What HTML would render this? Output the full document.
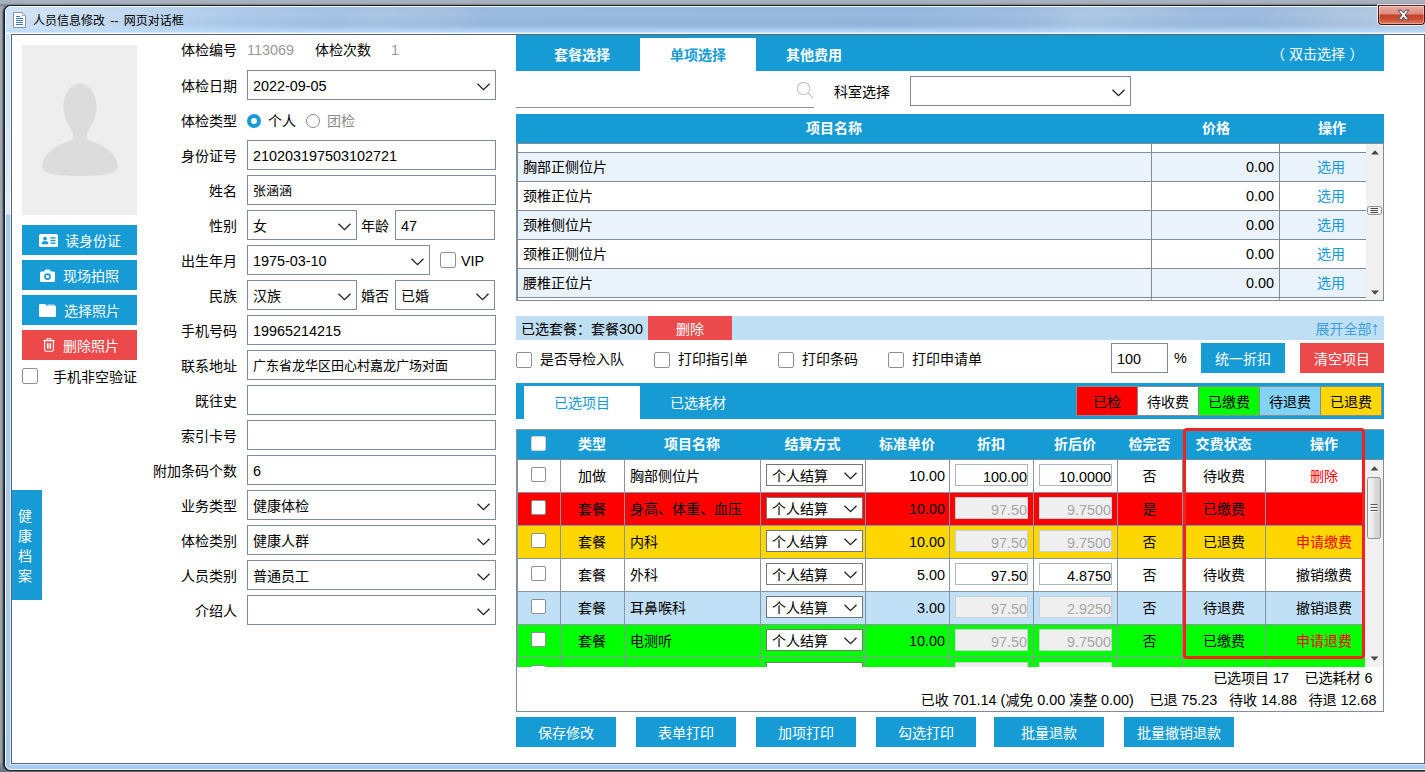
<!DOCTYPE html>
<html lang="zh-CN">
<head>
<meta charset="utf-8">
<title>人员信息修改 -- 网页对话框</title>
<style>
*{box-sizing:border-box;margin:0;padding:0}
html,body{width:1425px;height:772px;overflow:hidden}
body{position:relative;background:#a3adb9;font-family:"Liberation Sans","Noto Sans CJK SC",sans-serif;font-size:14px;color:#000;line-height:1}
.a{position:absolute}
/* window chrome */
#desk{left:0;top:0;width:1425px;height:772px;background:linear-gradient(180deg,#a9b3bf 0,#a6b0bc 3px,#7d8590 5px,#7d8590 6px,#9ea8b4 7px,#9ea8b4 400px,#98a2ae 760px,#6a727c 772px)}
#win{left:4px;top:5px;width:1440px;height:766px;border:1px solid #1c2026;border-radius:7px 0 0 7px;background:#a9cbee;box-shadow:-1px 0 0 rgba(30,33,38,.7),-2px 0 1px rgba(0,0,0,.25)}
#winhi{left:5px;top:6px;width:1440px;height:764px;border:1px solid #f4f9fe;border-radius:6px 0 0 6px;background:linear-gradient(180deg,#d0e3f7 0,#d2e4f6 120px,#e0ecf9 207px,#a9c9ed 208px,#a8caee 100%)}
#tbar{left:6px;top:7px;width:1419px;height:27px;border-radius:5px 0 0 0;background:linear-gradient(180deg,rgba(255,255,255,0) 0,rgba(255,255,255,.04) 8px,rgba(0,0,0,.02) 16px,rgba(200,228,255,.0) 19px,rgba(185,220,255,.75) 24px,rgba(185,220,255,.75) 25px,rgba(255,255,255,.8) 26px),linear-gradient(115deg,transparent 300px,rgba(255,255,255,.10) 340px,rgba(255,255,255,.10) 400px,transparent 440px,transparent 930px,rgba(255,255,255,.12) 980px,rgba(255,255,255,.05) 1040px,transparent 1080px),linear-gradient(90deg,#d0e3f7 0,#c6dcf3 90px,#abc9ea 230px,#98b9de 420px,#94b6dc 900px,#a0bfe2 1080px,#9ab9dd 1250px,#b3c9e2 1380px)}
#title{left:33px;top:13px;font-size:12px;line-height:16px;word-spacing:2px;color:#000;white-space:nowrap}
#closeb{left:1378px;top:5px;width:47px;height:20px;border:1px solid #47160f;border-top-color:#5a2a22;border-radius:0 0 4px 4px;background:linear-gradient(180deg,#e9aaa1 0,#dc8b7f 8px,#c4402a 9px,#cc4a31 13px,#dd7e62 18px);box-shadow:0 0 0 1px rgba(255,255,255,.75)}
#closeh{left:0;top:0;width:45px;height:18px;border:1px solid rgba(255,255,255,.35);border-radius:0 0 3px 3px}
#content{left:11px;top:34px;width:1414px;height:730px;border:1px solid #5a6673;background:#fff;box-shadow:0 0 0 1px rgba(255,255,255,.55)}
/* form */
.lb{position:absolute;left:140px;width:97px;text-align:right;line-height:32px;height:30px;white-space:nowrap}
.in{position:absolute;height:30px;border:1px solid #7f8c99;background:#fff;line-height:28px;padding:1px 0 0 5px;white-space:nowrap;overflow:hidden;font-size:13px}
.chev{position:absolute;right:5px;top:12px;width:13px;height:8px}
.btn{position:absolute;height:30px;line-height:32px;overflow:hidden;color:#fff;background:#169bd5;text-align:center;white-space:nowrap}
.red{background:#ec4a4a}
.cb{position:absolute;width:16px;height:16px;border:1px solid #8f8f8f;border-radius:2px;background:#fff}
.g{color:#999}
.in.s{font-size:14px}

.n{font-size:14.4px}
.bar{background:#169bd5}
.tab{height:33px;line-height:35px;overflow:hidden;text-align:center;color:#fff;font-weight:bold;white-space:nowrap}
.tab.on{background:#fff;color:#169bd5}
.thc{height:30px;line-height:28px;text-align:center;color:#fff;font-weight:bold;white-space:nowrap}
.r1{left:0;width:849px;height:29px;line-height:29px;border-top:1px solid #7f8c99;white-space:nowrap}
.lk{color:#169bd5;text-align:center}
.lg{width:62px;height:30px;line-height:30px;border:1px solid #8c8c8c;text-align:center;white-space:nowrap}
.r2{left:0;width:848px;height:33px;line-height:33px;white-space:nowrap}
.r2 span{top:0}
.c{text-align:center}
.sel{position:absolute;width:97px;height:22px;line-height:23px;overflow:hidden;border:1px solid #767676;background:#fff;padding-left:5px}
.ti{position:absolute;width:73px;height:22px;line-height:22px;border:1px solid #abb6c2;background:#fff;text-align:right;padding:1px 0 0 0;overflow:hidden}
.ti.dis{background:#efefef;color:#a6a6a6;border-color:#c8cfd6}
</style>
</head>
<body>
<div class="a" id="desk"></div>
<div class="a" id="win"></div>
<div class="a" id="winhi"></div>
<div class="a" id="tbar"></div>
<svg class="a" style="left:13px;top:12px" width="14" height="17" viewBox="0 0 14 17"><path d="M0.5 0.5 H9.5 L12.5 3.5 V15.5 H0.5 Z" fill="#fff" stroke="#8e9297"/><path d="M9.5 0.5 V3.5 H12.5" fill="#eef1f5" stroke="#a9adb3"/><path d="M3 4.5 H7 M3 6.5 H10 M3 8.5 H10 M3 10.5 H10 M3 12.5 H10" stroke="#3b78c5" stroke-width="1"/></svg>
<div class="a" id="title">人员信息修改 -- 网页对话框</div>
<div class="a" id="closeb"><div class="a" id="closeh"></div><svg class="a" style="left:18px;top:3px" width="13" height="12" viewBox="0 0 13 12"><path d="M1.2 1.2 H4.4 L6.5 4 L8.6 1.2 H11.8 L8.2 6 L11.8 10.8 H8.6 L6.5 8 L4.4 10.8 H1.2 L4.8 6 Z" fill="#fff" stroke="#4a4f5e" stroke-width="1" stroke-linejoin="round"/></svg></div>
<div class="a" id="content"></div>

<!-- LEFT -->
<div id="left">
<!-- photo -->
<div class="a" style="left:22px;top:45px;width:115px;height:170px;background:#eeeeee;overflow:hidden">
<svg class="a" style="left:0;top:0" width="115" height="170" viewBox="0 0 115 170"><path d="M58 38.5 C67 38.5 74.5 49 74.5 62 C74.5 73 69 81 65.5 87 C64 90 64.5 94 68 96 C80 99 95.5 108 95.5 121 C95.5 128 85 131 58 131 C31 131 20.5 128 20.5 121 C20.5 108 36 99 48 96 C51.5 94 52 90 50.5 87 C47 81 41.5 73 41.5 62 C41.5 49 49 38.5 58 38.5 Z" fill="#dcdcdc"/></svg>
</div>
<!-- buttons -->
<div class="btn" style="left:22px;top:225px;width:115px"><svg class="a" style="left:17px;top:9px" width="19" height="13" viewBox="0 0 19 13"><rect x="0" y="0" width="19" height="13" rx="1.5" fill="#fff"/><circle cx="6" cy="4.6" r="1.9" fill="#169bd5"/><path d="M2.6 10.2 C2.6 7.6 4.2 7 6 7 C7.8 7 9.4 7.6 9.4 10.2 Z" fill="#169bd5"/><rect x="11.5" y="3.2" width="5" height="1.4" fill="#169bd5"/><rect x="11.5" y="5.8" width="5" height="1.4" fill="#169bd5"/><rect x="11.5" y="8.4" width="5" height="1.4" fill="#169bd5"/></svg><span class="a" style="left:43px;top:0">读身份证</span></div>
<div class="btn" style="left:22px;top:260px;width:115px"><svg class="a" style="left:18px;top:9px" width="15" height="13" viewBox="0 0 15 13"><path d="M1.5 2.5 H4.2 L5.3 0.6 H9.7 L10.8 2.5 H13.5 Q15 2.5 15 4 V11.5 Q15 13 13.5 13 H1.5 Q0 13 0 11.5 V4 Q0 2.5 1.5 2.5 Z" fill="#fff"/><circle cx="7.5" cy="7.6" r="3.4" fill="#169bd5"/><circle cx="7.5" cy="7.6" r="1.7" fill="#fff"/></svg><span class="a" style="left:41px;top:0">现场拍照</span></div>
<div class="btn" style="left:22px;top:295px;width:115px"><svg class="a" style="left:17px;top:9px" width="17" height="13" viewBox="0 0 17 13"><path d="M1.2 0 H6.2 L7.8 1.8 H15.8 Q17 1.8 17 3 V11.8 Q17 13 15.8 13 H1.2 Q0 13 0 11.8 V1.2 Q0 0 1.2 0 Z" fill="#fff"/><path d="M8.5 1.1 H14.6 Q15.8 1.1 15.9 2" stroke="#fff" stroke-width="1" fill="none"/></svg><span class="a" style="left:42px;top:0">选择照片</span></div>
<div class="btn red" style="left:22px;top:330px;width:115px"><svg class="a" style="left:21px;top:8px" width="12" height="14" viewBox="0 0 12 14"><path d="M0.3 2.6 H11.7 M4 2.4 V0.7 H8 V2.4 M1.6 2.8 V11.6 Q1.6 13.3 3.3 13.3 H8.7 Q10.4 13.3 10.4 11.6 V2.8 M4.4 5.2 V10.8 M6 5.2 V10.8 M7.6 5.2 V10.8" stroke="#fff" stroke-width="1.1" fill="none"/></svg><span class="a" style="left:41px;top:0">删除照片</span></div>
<div class="cb" style="left:22px;top:368px"></div>
<div class="a" style="left:53px;top:361px;line-height:32px;white-space:nowrap">手机非空验证</div>
<!-- vertical tab -->
<div class="a" style="left:12px;top:490px;width:30px;height:110px;background:#169bd5;color:#fff;text-align:center;line-height:20px;padding:16px 4px 0 0">健<br>康<br>档<br>案</div>

<!-- form rows -->
<div class="lb" style="top:34px">体检编号</div><div class="a g n" style="left:247px;top:34px;line-height:32px">113069</div>
<div class="a" style="left:315px;top:34px;line-height:32px">体检次数</div><div class="a g n" style="left:391px;top:34px;line-height:32px">1</div>

<div class="lb" style="top:70px">体检日期</div><div class="in n" style="left:247px;top:70px;width:249px">2022-09-05<svg class="chev" viewBox="0 0 13 8"><path d="M0.5 0.7 L6.5 6.7 L12.5 0.7" stroke="#222" stroke-width="1.3" fill="none"/></svg></div>

<div class="lb" style="top:105px">体检类型</div>
<div class="a" style="left:247px;top:114px;width:14px;height:14px;border-radius:7px;border:4px solid #169bd5;background:#fff"></div>
<div class="a" style="left:268px;top:105px;line-height:32px">个人</div>
<div class="a" style="left:306px;top:114px;width:14px;height:14px;border-radius:7px;border:1px solid #8f8f8f;background:#fff"></div>
<div class="a g" style="left:327px;top:105px;line-height:32px;color:#8c8c8c">团检</div>

<div class="lb" style="top:140px">身份证号</div><div class="in n" style="left:247px;top:140px;width:249px">210203197503102721</div>
<div class="lb" style="top:175px">姓名</div><div class="in" style="left:247px;top:175px;width:249px">张涵涵</div>
<div class="lb" style="top:210px">性别</div><div class="in s" style="left:247px;top:210px;width:110px">女<svg class="chev" viewBox="0 0 13 8"><path d="M0.5 0.7 L6.5 6.7 L12.5 0.7" stroke="#222" stroke-width="1.3" fill="none"/></svg></div>
<div class="a" style="left:361px;top:210px;line-height:32px">年龄</div><div class="in n" style="left:395px;top:210px;width:100px">47</div>
<div class="lb" style="top:245px">出生年月</div><div class="in n" style="left:247px;top:245px;width:183px">1975-03-10<svg class="chev" viewBox="0 0 13 8"><path d="M0.5 0.7 L6.5 6.7 L12.5 0.7" stroke="#222" stroke-width="1.3" fill="none"/></svg></div>
<div class="cb" style="left:440px;top:252px"></div><div class="a n" style="left:461px;top:245px;line-height:32px">VIP</div>
<div class="lb" style="top:280px">民族</div><div class="in s" style="left:247px;top:280px;width:110px">汉族<svg class="chev" viewBox="0 0 13 8"><path d="M0.5 0.7 L6.5 6.7 L12.5 0.7" stroke="#222" stroke-width="1.3" fill="none"/></svg></div>
<div class="a" style="left:361px;top:280px;line-height:32px">婚否</div><div class="in s" style="left:395px;top:280px;width:100px">已婚<svg class="chev" viewBox="0 0 13 8"><path d="M0.5 0.7 L6.5 6.7 L12.5 0.7" stroke="#222" stroke-width="1.3" fill="none"/></svg></div>
<div class="lb" style="top:315px">手机号码</div><div class="in n" style="left:247px;top:315px;width:249px">19965214215</div>
<div class="lb" style="top:350px">联系地址</div><div class="in" style="left:247px;top:350px;width:249px">广东省龙华区田心村嘉龙广场对面</div>
<div class="lb" style="top:385px">既往史</div><div class="in" style="left:247px;top:385px;width:249px"></div>
<div class="lb" style="top:420px">索引卡号</div><div class="in" style="left:247px;top:420px;width:249px"></div>
<div class="lb" style="top:455px">附加条码个数</div><div class="in n" style="left:247px;top:455px;width:249px">6</div>
<div class="lb" style="top:490px">业务类型</div><div class="in s" style="left:247px;top:490px;width:249px">健康体检<svg class="chev" viewBox="0 0 13 8"><path d="M0.5 0.7 L6.5 6.7 L12.5 0.7" stroke="#222" stroke-width="1.3" fill="none"/></svg></div>
<div class="lb" style="top:525px">体检类别</div><div class="in s" style="left:247px;top:525px;width:249px">健康人群<svg class="chev" viewBox="0 0 13 8"><path d="M0.5 0.7 L6.5 6.7 L12.5 0.7" stroke="#222" stroke-width="1.3" fill="none"/></svg></div>
<div class="lb" style="top:560px">人员类别</div><div class="in s" style="left:247px;top:560px;width:249px">普通员工<svg class="chev" viewBox="0 0 13 8"><path d="M0.5 0.7 L6.5 6.7 L12.5 0.7" stroke="#222" stroke-width="1.3" fill="none"/></svg></div>
<div class="lb" style="top:595px">介绍人</div><div class="in s" style="left:247px;top:595px;width:249px"><svg class="chev" viewBox="0 0 13 8"><path d="M0.5 0.7 L6.5 6.7 L12.5 0.7" stroke="#222" stroke-width="1.3" fill="none"/></svg></div>
</div>

<!-- RIGHT -->
<div id="right">
<div class="a bar" style="left:516px;top:35px;width:868px;height:36px"></div>
<div class="a tab" style="left:524px;top:38px;width:116px">套餐选择</div>
<div class="a tab on" style="left:640px;top:38px;width:116px">单项选择</div>
<div class="a tab" style="left:756px;top:38px;width:116px">其他费用</div>
<div class="a" style="left:1275px;top:38px;width:82px;height:33px;line-height:33px;color:#fff;text-align:center;white-space:nowrap"><span style="position:relative;left:-4px">（</span>双击选择<span style="position:relative;left:4.5px">）</span></div>
<div class="a" style="left:516px;top:107px;width:298px;height:1px;background:#8795a3"></div>
<svg class="a" style="left:796px;top:81px" width="18" height="18" viewBox="0 0 18 18"><circle cx="7.6" cy="7.6" r="6.2" stroke="#c4c4c4" stroke-width="1.1" fill="none"/><path d="M12.2 12.2 L17 17" stroke="#c4c4c4" stroke-width="1.1"/></svg>
<div class="a" style="left:834px;top:77px;line-height:30px;white-space:nowrap">科室选择</div>
<div class="in" style="left:910px;top:76px;width:221px"><svg class="chev" viewBox="0 0 13 8"><path d="M0.5 0.7 L6.5 6.7 L12.5 0.7" stroke="#222" stroke-width="1.3" fill="none"/></svg></div>
<div class="a bar th" style="left:516px;top:114px;width:868px;height:30px"></div>
<div class="a thc" style="left:516px;top:114px;width:636px">项目名称</div>
<div class="a thc" style="left:1152px;top:114px;width:128px">价格</div>
<div class="a thc" style="left:1280px;top:114px;width:104px">操作</div>
<div class="a" style="left:516px;top:143px;width:868px;height:158px;border:1px solid #7f8c99;background:#fff;overflow:hidden">
<div class="a r1" style="top:8px;background:#eaf2fb"><span class="a" style="left:6px;top:0">胸部正侧位片</span><span class="a n" style="right:92px;top:0">0.00</span><span class="a lk" style="left:786px;top:0;width:56px">选用</span></div>
<div class="a r1" style="top:37px;background:#fff"><span class="a" style="left:6px;top:0">颈椎正位片</span><span class="a n" style="right:92px;top:0">0.00</span><span class="a lk" style="left:786px;top:0;width:56px">选用</span></div>
<div class="a r1" style="top:66px;background:#eaf2fb"><span class="a" style="left:6px;top:0">颈椎侧位片</span><span class="a n" style="right:92px;top:0">0.00</span><span class="a lk" style="left:786px;top:0;width:56px">选用</span></div>
<div class="a r1" style="top:95px;background:#fff"><span class="a" style="left:6px;top:0">颈椎正侧位片</span><span class="a n" style="right:92px;top:0">0.00</span><span class="a lk" style="left:786px;top:0;width:56px">选用</span></div>
<div class="a r1" style="top:124px;background:#eaf2fb"><span class="a" style="left:6px;top:0">腰椎正位片</span><span class="a n" style="right:92px;top:0">0.00</span><span class="a lk" style="left:786px;top:0;width:56px">选用</span></div>
<div class="a" style="left:0;top:153px;width:849px;height:1px;background:#7f8c99"></div>
<div class="a" style="left:0;top:0;width:1px;height:158px;background:#7f8c99"></div>
<div class="a" style="left:634px;top:0;width:1px;height:158px;background:#7f8c99"></div>
<div class="a" style="left:762px;top:0;width:1px;height:158px;background:#7f8c99"></div>
<div class="a" style="left:849px;top:0;width:17px;height:156px;background:#f0f0f0"></div>
<svg class="a" style="left:849px;top:0" width="17" height="156" viewBox="0 0 17 156"><path d="M5 10.5 L9 6.3 L13 10.5 Z" fill="#484848"/><path d="M5 146.5 L9 150.7 L13 146.5 Z" fill="#484848"/><rect x="1.5" y="62.5" width="14" height="8" rx="2" fill="#f2f2f2" stroke="#8f8f8f"/><path d="M4.5 64.5 H12 M4.5 66.5 H12 M4.5 68.5 H12" stroke="#4a4a4a" stroke-width="1"/></svg>
</div>
<div class="a" style="left:516px;top:316px;width:868px;height:24px;background:#bfdff5"></div>
<div class="a" style="left:521px;top:316px;line-height:26px;white-space:nowrap">已选套餐：套餐<span class="n">300</span></div>
<div class="btn red" style="left:648px;top:316px;width:84px;height:24px;line-height:26px">删除</div>
<div class="a" style="left:1290px;top:316px;width:90px;text-align:right;line-height:26px;height:24px;overflow:hidden;color:#3f9fdb;white-space:nowrap">展开全部<span style="font-size:19px;line-height:10px;position:relative;top:1px;margin-left:-1px">↑</span></div>
<div class="cb" style="left:516px;top:352px"></div><div class="a" style="left:540px;top:344px;line-height:30px;white-space:nowrap">是否导检入队</div>
<div class="cb" style="left:654px;top:352px"></div><div class="a" style="left:678px;top:344px;line-height:30px;white-space:nowrap">打印指引单</div>
<div class="cb" style="left:778px;top:352px"></div><div class="a" style="left:802px;top:344px;line-height:30px;white-space:nowrap">打印条码</div>
<div class="cb" style="left:888px;top:352px"></div><div class="a" style="left:912px;top:344px;line-height:30px;white-space:nowrap">打印申请单</div>
<div class="in n" style="left:1111px;top:343px;width:57px">100</div>
<div class="a n" style="left:1174px;top:343px;line-height:30px">%</div>
<div class="btn" style="left:1201px;top:343px;width:84px">统一折扣</div>
<div class="btn red" style="left:1300px;top:343px;width:84px">清空项目</div>
<div class="a bar" style="left:516px;top:383px;width:868px;height:36px"></div>
<div class="a tab on" style="left:524px;top:386px;width:116px;font-weight:normal">已选项目</div>
<div class="a tab" style="left:640px;top:386px;width:116px;font-weight:normal">已选耗材</div>
<div class="a lg" style="left:1076px;top:386px;background:#ff0000">已检</div>
<div class="a lg" style="left:1137px;top:386px;background:#ffffff">待收费</div>
<div class="a lg" style="left:1198px;top:386px;background:#00ff00">已缴费</div>
<div class="a lg" style="left:1259px;top:386px;background:#81d3f8">待退费</div>
<div class="a lg" style="left:1320px;top:386px;background:#ffd700">已退费</div>
<div class="a bar" style="left:516px;top:429px;width:868px;height:31px;border-top:1px solid #8b959e;border-left:1px solid #8b959e"></div>
<div class="a" style="left:531px;top:436px;width:15px;height:15px;background:#fff;border-radius:2px;border:1px solid #d8d0cc"></div>
<div class="a thc" style="left:560px;top:430px;width:64px">类型</div>
<div class="a thc" style="left:624px;top:430px;width:136px">项目名称</div>
<div class="a thc" style="left:760px;top:430px;width:105px">结算方式</div>
<div class="a thc" style="left:865px;top:430px;width:84px">标准单价</div>
<div class="a thc" style="left:949px;top:430px;width:84px">折扣</div>
<div class="a thc" style="left:1033px;top:430px;width:84px">折后价</div>
<div class="a thc" style="left:1117px;top:430px;width:65px">检完否</div>
<div class="a thc" style="left:1182px;top:430px;width:83px">交费状态</div>
<div class="a thc" style="left:1265px;top:430px;width:118px">操作</div>
<div class="a" style="left:516px;top:459px;width:868px;height:253px;border:1px solid #7f8c99;background:#fff"></div>
<div class="a" style="left:517px;top:460px;width:866px;height:207px;overflow:hidden">
<div class="a r2" style="top:0px;background:#fff">
<div class="cb" style="left:14px;top:7px;width:15px;height:15px"></div>
<span class="a c" style="left:43px;width:64px">加做</span>
<span class="a" style="left:113px">胸部侧位片</span>
<div class="sel" style="left:249px;top:4px">个人结算<svg class="a" style="right:5px;top:7px" width="13" height="8" viewBox="0 0 13 8"><path d="M0.5 0.7 L6.5 6.7 L12.5 0.7" stroke="#222" stroke-width="1.3" fill="none"/></svg></div>
<span class="a n" style="right:420px">10.00</span>
<div class="ti n" style="left:438px;top:4px">100.00</div>
<div class="ti n" style="left:522px;top:4px">10.0000</div>
<span class="a c" style="left:600px;width:65px">否</span>
<span class="a c" style="left:666px;width:82px">待收费</span>
<span class="a c" style="left:766px;width:82px;color:#f00">删除</span>
</div>
<div class="a r2" style="top:33px;background:#ff0000">
<div class="cb" style="left:14px;top:7px;width:15px;height:15px"></div>
<span class="a c" style="left:43px;width:64px">套餐</span>
<span class="a" style="left:113px">身高、体重、血压</span>
<div class="sel" style="left:249px;top:4px">个人结算<svg class="a" style="right:5px;top:7px" width="13" height="8" viewBox="0 0 13 8"><path d="M0.5 0.7 L6.5 6.7 L12.5 0.7" stroke="#222" stroke-width="1.3" fill="none"/></svg></div>
<span class="a n" style="right:420px">10.00</span>
<div class="ti n dis" style="left:438px;top:4px">97.50</div>
<div class="ti n dis" style="left:522px;top:4px">9.7500</div>
<span class="a c" style="left:600px;width:65px">是</span>
<span class="a c" style="left:666px;width:82px">已缴费</span>
<span class="a c" style="left:766px;width:82px;color:#000"></span>
</div>
<div class="a r2" style="top:66px;background:#ffd700">
<div class="cb" style="left:14px;top:7px;width:15px;height:15px"></div>
<span class="a c" style="left:43px;width:64px">套餐</span>
<span class="a" style="left:113px">内科</span>
<div class="sel" style="left:249px;top:4px">个人结算<svg class="a" style="right:5px;top:7px" width="13" height="8" viewBox="0 0 13 8"><path d="M0.5 0.7 L6.5 6.7 L12.5 0.7" stroke="#222" stroke-width="1.3" fill="none"/></svg></div>
<span class="a n" style="right:420px">10.00</span>
<div class="ti n dis" style="left:438px;top:4px">97.50</div>
<div class="ti n dis" style="left:522px;top:4px">9.7500</div>
<span class="a c" style="left:600px;width:65px">否</span>
<span class="a c" style="left:666px;width:82px">已退费</span>
<span class="a c" style="left:766px;width:82px;color:#f00">申请缴费</span>
</div>
<div class="a r2" style="top:99px;background:#fff">
<div class="cb" style="left:14px;top:7px;width:15px;height:15px"></div>
<span class="a c" style="left:43px;width:64px">套餐</span>
<span class="a" style="left:113px">外科</span>
<div class="sel" style="left:249px;top:4px">个人结算<svg class="a" style="right:5px;top:7px" width="13" height="8" viewBox="0 0 13 8"><path d="M0.5 0.7 L6.5 6.7 L12.5 0.7" stroke="#222" stroke-width="1.3" fill="none"/></svg></div>
<span class="a n" style="right:420px">5.00</span>
<div class="ti n" style="left:438px;top:4px">97.50</div>
<div class="ti n" style="left:522px;top:4px">4.8750</div>
<span class="a c" style="left:600px;width:65px">否</span>
<span class="a c" style="left:666px;width:82px">待收费</span>
<span class="a c" style="left:766px;width:82px;color:#000">撤销缴费</span>
</div>
<div class="a r2" style="top:132px;background:#c0e0f7">
<div class="cb" style="left:14px;top:7px;width:15px;height:15px"></div>
<span class="a c" style="left:43px;width:64px">套餐</span>
<span class="a" style="left:113px">耳鼻喉科</span>
<div class="sel" style="left:249px;top:4px">个人结算<svg class="a" style="right:5px;top:7px" width="13" height="8" viewBox="0 0 13 8"><path d="M0.5 0.7 L6.5 6.7 L12.5 0.7" stroke="#222" stroke-width="1.3" fill="none"/></svg></div>
<span class="a n" style="right:420px">3.00</span>
<div class="ti n dis" style="left:438px;top:4px">97.50</div>
<div class="ti n dis" style="left:522px;top:4px">2.9250</div>
<span class="a c" style="left:600px;width:65px">否</span>
<span class="a c" style="left:666px;width:82px">待退费</span>
<span class="a c" style="left:766px;width:82px;color:#000">撤销退费</span>
</div>
<div class="a r2" style="top:165px;background:#00ff00">
<div class="cb" style="left:14px;top:7px;width:15px;height:15px"></div>
<span class="a c" style="left:43px;width:64px">套餐</span>
<span class="a" style="left:113px">电测听</span>
<div class="sel" style="left:249px;top:4px">个人结算<svg class="a" style="right:5px;top:7px" width="13" height="8" viewBox="0 0 13 8"><path d="M0.5 0.7 L6.5 6.7 L12.5 0.7" stroke="#222" stroke-width="1.3" fill="none"/></svg></div>
<span class="a n" style="right:420px">10.00</span>
<div class="ti n dis" style="left:438px;top:4px">97.50</div>
<div class="ti n dis" style="left:522px;top:4px">9.7500</div>
<span class="a c" style="left:600px;width:65px">否</span>
<span class="a c" style="left:666px;width:82px">已缴费</span>
<span class="a c" style="left:766px;width:82px;color:#f00">申请退费</span>
</div>
<div class="a r2" style="top:198px;background:#00ff00">
<div class="cb" style="left:14px;top:7px;width:15px;height:15px"></div>
<span class="a c" style="left:43px;width:64px"></span>
<span class="a" style="left:113px"></span>
<div class="sel" style="left:249px;top:4px"><svg class="a" style="right:5px;top:7px" width="13" height="8" viewBox="0 0 13 8"><path d="M0.5 0.7 L6.5 6.7 L12.5 0.7" stroke="#222" stroke-width="1.3" fill="none"/></svg></div>
<span class="a n" style="right:420px"></span>
<div class="ti n dis" style="left:438px;top:4px"></div>
<div class="ti n dis" style="left:522px;top:4px"></div>
<span class="a c" style="left:600px;width:65px"></span>
<span class="a c" style="left:666px;width:82px"></span>
<span class="a c" style="left:766px;width:82px;color:#000"></span>
</div>
<div class="a" style="left:0;top:32px;width:848px;height:1px;background:#8b959e"></div>
<div class="a" style="left:0;top:65px;width:848px;height:1px;background:#8b959e"></div>
<div class="a" style="left:0;top:98px;width:848px;height:1px;background:#8b959e"></div>
<div class="a" style="left:0;top:131px;width:848px;height:1px;background:#8b959e"></div>
<div class="a" style="left:0;top:164px;width:848px;height:1px;background:#8b959e"></div>
<div class="a" style="left:0;top:197px;width:848px;height:1px;background:#8b959e"></div>
<div class="a" style="left:0;top:0;width:1px;height:207px;background:#8b959e"></div>
<div class="a" style="left:43px;top:0;width:1px;height:207px;background:#8b959e"></div>
<div class="a" style="left:107px;top:0;width:1px;height:207px;background:#8b959e"></div>
<div class="a" style="left:243px;top:0;width:1px;height:207px;background:#8b959e"></div>
<div class="a" style="left:348px;top:0;width:1px;height:207px;background:#8b959e"></div>
<div class="a" style="left:432px;top:0;width:1px;height:207px;background:#8b959e"></div>
<div class="a" style="left:516px;top:0;width:1px;height:207px;background:#8b959e"></div>
<div class="a" style="left:600px;top:0;width:1px;height:207px;background:#8b959e"></div>
<div class="a" style="left:665px;top:0;width:1px;height:207px;background:#8b959e"></div>
<div class="a" style="left:748px;top:0;width:1px;height:207px;background:#8b959e"></div>
<div class="a" style="left:848px;top:0;width:18px;height:207px;background:#f0f0f0"></div>
<svg class="a" style="left:848px;top:0" width="18" height="207" viewBox="0 0 18 207"><defs><linearGradient id="tg" x1="0" x2="1" y1="0" y2="0"><stop offset="0" stop-color="#f7f7f7"/><stop offset="0.45" stop-color="#e9e9e9"/><stop offset="0.55" stop-color="#dadada"/><stop offset="1" stop-color="#cdcdcd"/></linearGradient></defs><path d="M5.5 10.5 L9.5 6.3 L13.5 10.5 Z" fill="#484848"/><path d="M5.5 196.5 L9.5 200.7 L13.5 196.5 Z" fill="#484848"/><rect x="2.5" y="17.5" width="13" height="61" rx="2" fill="url(#tg)" stroke="#8f8f8f"/><path d="M5.5 44.5 H12.5 M5.5 47.5 H12.5 M5.5 50.5 H12.5" stroke="#5a5a5a" stroke-width="1.2"/><path d="M5.5 45.6 H12.5 M5.5 48.6 H12.5 M5.5 51.6 H12.5" stroke="#fff" stroke-width="0.8"/></svg>
</div>
<div class="a" style="left:900px;top:667px;width:472.5px;text-align:right;line-height:22px;white-space:nowrap">已选项目 <span class="n">17</span>&nbsp;&nbsp;&nbsp; 已选耗材 <span class="n">6</span></div>
<div class="a" style="left:800px;top:689px;width:576.5px;text-align:right;line-height:22px;white-space:nowrap">已收 <span class="n">701.14 (</span>减免 <span class="n">0.00</span> 凑整 <span class="n">0.00)</span>&nbsp;&nbsp;&nbsp; 已退 <span class="n">75.23</span>&nbsp;&nbsp; 待收 <span class="n">14.88</span>&nbsp;&nbsp; 待退 <span class="n">12.68</span></div>
<div class="a" style="left:1183px;top:428px;width:182px;height:231px;border:3px solid #f8201c;border-radius:4px"></div>
<div class="btn" style="left:516px;top:717px;width:100px">保存修改</div>
<div class="btn" style="left:636px;top:717px;width:100px">表单打印</div>
<div class="btn" style="left:756px;top:717px;width:100px">加项打印</div>
<div class="btn" style="left:876px;top:717px;width:100px">勾选打印</div>
<div class="btn" style="left:994px;top:717px;width:110px">批量退款</div>
<div class="btn" style="left:1124px;top:717px;width:110px">批量撤销退款</div>
</div>

</body>
</html>
